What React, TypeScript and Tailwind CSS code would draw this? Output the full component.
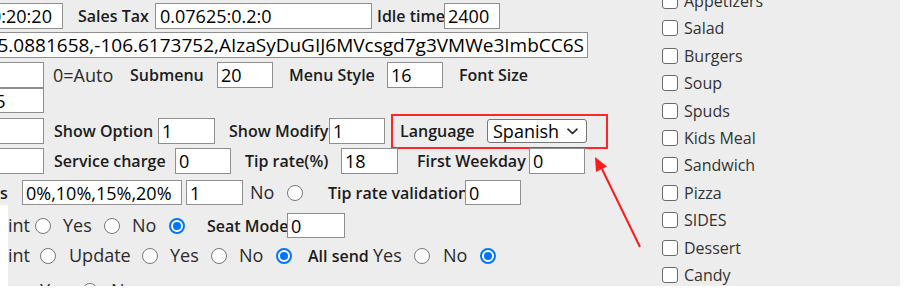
import React from "react";

const box =
  "h-full shrink-0 bg-white border border-[#8f8f8f] flex items-center overflow-hidden whitespace-nowrap text-[18px] leading-none text-black";
const lbl = "shrink-0 whitespace-nowrap text-[16px] font-semibold text-[#1c1c1c]";
const txt = "shrink-0 whitespace-nowrap text-[18px] text-[#2b2b2b]";

function Radio({ on = false, className = "" }: { on?: boolean; className?: string }) {
  if (on) {
    return (
      <span className={`shrink-0 w-4 h-4 rounded-full border-2 border-[#0075ff] bg-white flex items-center justify-center ${className}`}>
        <span className="w-2 h-2 rounded-full bg-[#0075ff]" />
      </span>
    );
  }
  return <span className={`shrink-0 w-4 h-4 rounded-full border border-[#767676] bg-white ${className}`} />;
}

const categories = [
  "Appetizers",
  "Salad",
  "Burgers",
  "Soup",
  "Spuds",
  "Kids Meal",
  "Sandwich",
  "Pizza",
  "SIDES",
  "Dessert",
  "Candy",
];

export default function App() {
  return (
    <div className="relative w-[910px] h-[292px] bg-white [font-family:'Open_Sans',sans-serif]">
      <div className="w-[900px] h-[286px] bg-[#ededed] overflow-hidden flex">
        {/* Settings form */}
        <div className="w-[662px] shrink-0 flex flex-col pt-[3px]">
          {/* row 1 */}
          <div className="flex items-center shrink-0 h-[26px]">
            <div className={`${box} ml-[-10px] w-[73px]`}>0:20:20</div>
            <span className={`${lbl} ml-[15px] w-[77px]`}>Sales Tax</span>
            <div className={`${box} w-[217px] pl-[4px]`}>0.07625:0.2:0</div>
            <span className={`${lbl} ml-[5px] w-[67px]`}>Idle time</span>
            <div className={`${box} w-[56px] pl-[3px]`}>2400</div>
          </div>

          {/* row 2 */}
          <div className="flex items-center shrink-0 h-[26px] mt-[3px]">
            <div className="h-full shrink-0 ml-[-10px] w-[598px] bg-white border border-[#8f8f8f] flex items-center justify-end pr-[3px] overflow-hidden whitespace-nowrap text-[19px] leading-none text-black">
              35.0881658,-106.6173752,AIzaSyDuGIJ6MVcsgd7g3VMWe3ImbCC6S
            </div>
          </div>

          {/* row 3 */}
          <div className="flex items-center shrink-0 h-[26px] mt-[4px]">
            <div className={`${box} ml-[-10px] w-[54px]`} />
            <span className={`${txt} ml-[9px] w-[77px]`}>0=Auto</span>
            <span className={`${lbl} w-[87px]`}>Submenu</span>
            <div className={`${box} w-[56px] pl-[3px]`}>20</div>
            <span className={`${lbl} ml-[16px] w-[98px]`}>Menu Style</span>
            <div className={`${box} w-[56px] pl-[3px]`}>16</div>
            <span className={`${lbl} ml-[16px]`}>Font Size</span>
          </div>

          {/* row 4 */}
          <div className="flex items-center shrink-0 h-[25px]">
            <div className={`${box} ml-[-20px] w-[64px] pl-[4px]`}>15</div>
          </div>

          {/* row 5 */}
          <div className="flex items-center shrink-0 h-[26px] mt-[5px]">
            <div className={`${box} ml-[-10px] w-[54px]`} />
            <span className={`${lbl} ml-[10px] w-[104px]`}>Show Option</span>
            <div className={`${box} w-[57px] pl-[3px]`}>1</div>
            <span className={`${lbl} ml-[14px] w-[100px]`}>Show Modify</span>
            <div className={`${box} w-[56px] pl-[3px]`}>1</div>
            <div className="shrink-0 ml-[6px] w-[217px] h-[35px] border-2 border-[#ff2626] flex items-center pl-[7px]">
              <span className={`${lbl} w-[87px]`}>Language</span>
              <div className="w-[100px] h-[24px] bg-white border border-[#767676] rounded-[3px] flex items-center justify-between pl-[5px] pr-[8px] text-[18px] leading-none text-black">
                Spanish
                <svg width="11" height="7" viewBox="0 0 11 7" fill="none">
                  <path d="M1 1.2l4.5 4.3L10 1.2" stroke="#222" strokeWidth="1.6" strokeLinecap="round" strokeLinejoin="round" />
                </svg>
              </div>
            </div>
          </div>

          {/* row 6 */}
          <div className="flex items-center shrink-0 h-[26px] mt-[4px]">
            <div className={`${box} ml-[-10px] w-[54px]`} />
            <span className={`${lbl} ml-[10px] w-[121px]`}>Service charge</span>
            <div className={`${box} w-[56px] pl-[3px]`}>0</div>
            <span className={`${lbl} ml-[14px] w-[96px]`}>Tip rate(%)</span>
            <div className={`${box} w-[57px] pl-[3px]`}>18</div>
            <span className={`${lbl} ml-[19px] w-[112px]`}>First Weekday</span>
            <div className={`${box} w-[56px] pl-[3px]`}>0</div>
          </div>

          {/* row 7 */}
          <div className="flex items-center shrink-0 h-[25px] mt-[6px]">
            <span className={`${lbl} w-[22px]`}>s</span>
            <div className={`${box} w-[160px] pl-[3px]`}>0%,10%,15%,20%</div>
            <div className={`${box} ml-[4px] w-[57px] pl-[3px]`}>1</div>
            <span className={`${txt} ml-[7px] w-[37px]`}>No</span>
            <Radio />
            <span className={`${lbl} ml-[25px] w-[137px]`}>Tip rate validation</span>
            <div className={`${box} w-[56px] pl-[3px]`}>0</div>
          </div>

          {/* radio rows */}
          <div className="flex-1 shrink-0 flex flex-col border-l-8 border-white">
            <div className="flex items-center shrink-0 h-[25px] mt-[8px]">
              <span className={`${txt} w-[27px]`}>int</span>
              <Radio />
              <span className={`${txt} ml-[12px] w-[41px]`}>Yes</span>
              <Radio />
              <span className={`${txt} ml-[12px] w-[37px]`}>No</span>
              <Radio on />
              <span className={`${lbl} ml-[22px] w-[80px]`}>Seat Mode</span>
              <div className={`${box} w-[58px] pl-[3px]`}>0</div>
            </div>

            <div className="flex items-center shrink-0 h-[25px] mt-[5px]">
              <span className={`${txt} w-[32px]`}>int</span>
              <Radio />
              <span className={`${txt} ml-[13px] w-[73px]`}>Update</span>
              <Radio />
              <span className={`${txt} ml-[12px] w-[41px]`}>Yes</span>
              <Radio />
              <span className={`${txt} ml-[12px] w-[37px]`}>No</span>
              <Radio on />
              <span className={`${lbl} ml-[16px] w-[65px]`}>All send</span>
              <span className={`${txt} w-[41px]`}>Yes</span>
              <Radio />
              <span className={`${txt} ml-[13px] w-[37px]`}>No</span>
              <Radio on />
            </div>

            <div className="flex items-center shrink-0 h-[25px] mt-[10px]">
              <span className={`${txt} ml-[32px] w-[42px]`}>Yes</span>
              <Radio />
              <span className={`${txt} ml-[13px]`}>No</span>
            </div>
          </div>
        </div>

        {/* Category checkboxes */}
        <div className="flex-1 flex flex-col mt-[-12.7px]">
          {categories.map((c) => (
            <div key={c} className="flex items-center h-[27.4px] shrink-0">
              <span className="w-4 h-4 shrink-0 rounded-[3px] border-[1.5px] border-[#6b6b6b] bg-white" />
              <span className="ml-[6px] text-[16px] text-[#333]">{c}</span>
            </div>
          ))}
        </div>
      </div>

      {/* annotation arrow */}
      <svg className="absolute left-0 top-0 pointer-events-none" width="910" height="292" viewBox="0 0 910 292">
        <line x1="640" y1="247" x2="602" y2="169" stroke="#ff1a1a" strokeWidth="2" />
        <polygon points="595,157 607,166.5 596,172" fill="#ff1a1a" />
      </svg>
    </div>
  );
}
